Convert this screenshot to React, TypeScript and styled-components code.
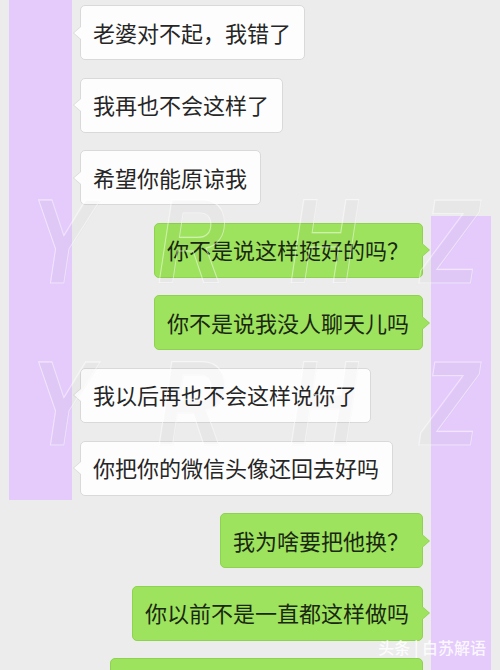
import React from 'react';
import styled, { createGlobalStyle, css } from 'styled-components';

type Side = 'left' | 'right';

interface Message {
  id: number;
  side: Side;
  text: string;
}

const messages: Message[] = [
  { id: 1, side: 'left', text: '老婆对不起，我错了' },
  { id: 2, side: 'left', text: '我再也不会这样了' },
  { id: 3, side: 'left', text: '希望你能原谅我' },
  { id: 4, side: 'right', text: '你不是说这样挺好的吗？' },
  { id: 5, side: 'right', text: '你不是说我没人聊天儿吗' },
  { id: 6, side: 'left', text: '我以后再也不会这样说你了' },
  { id: 7, side: 'left', text: '你把你的微信头像还回去好吗' },
  { id: 8, side: 'right', text: '我为啥要把他换？' },
  { id: 9, side: 'right', text: '你以前不是一直都这样做吗' },
  { id: 10, side: 'right', text: '那是以前啊，现在我不想换了' },
];

const MARK = ['Y', 'R', 'H', 'Z'];

const App = () => (
  <>
    <GlobalStyle />
    <Screen>
      <Thread>
        {messages.map((m) => (
          <Row key={m.id} side={m.side}>
            <Bubble side={m.side}>{m.text}</Bubble>
          </Row>
        ))}
      </Thread>

      <MaskBar side="left" />
      <MaskBar side="right" />

      <WatermarkLayer>
        <WatermarkRow>
          {MARK.map((l) => <MarkLetter key={l}>{l}</MarkLetter>)}
        </WatermarkRow>
        <WatermarkRow>
          {MARK.map((l) => <MarkLetter key={l}>{l}</MarkLetter>)}
        </WatermarkRow>
      </WatermarkLayer>

      <Credit>头条 | 白苏解语</Credit>
    </Screen>
  </>
);

const GlobalStyle = createGlobalStyle`
  html, body {
    margin: 0;
    padding: 0;
    background: #ececec;
  }

  body {
    font-family: "Noto Sans CJK SC", "Noto Sans", sans-serif;
  }
`;

const Screen = styled.div`
  position: relative;
  width: 500px;
  height: 670px;
  overflow: hidden;
  background: #ececec;
`;

const Thread = styled.div`
  display: flex;
  flex-direction: column;
  gap: 17.6px;
  padding-top: 5px;
`;

const Row = styled.div<{ side: Side }>`
  display: flex;
  justify-content: ${({ side }) => (side === 'left' ? 'flex-start' : 'flex-end')};
  padding: ${({ side }) => (side === 'left' ? '0 0 0 80px' : '0 77px 0 0')};
`;

const Bubble = styled.div<{ side: Side }>`
  position: relative;
  box-sizing: border-box;
  height: 55px;
  display: flex;
  align-items: center;
  padding: 0 13px 2px 12px;
  border-radius: 5px;
  font-size: 22px;
  line-height: 1;
  white-space: nowrap;

  ${({ side }) => (side === 'left'
    ? css`
      background: #fdfdfd;
      border: 1px solid #d9d9d9;
      color: #262626;
    `
    : css`
      background: #9ee35d;
      border: 1px solid #8fd24f;
      color: #1a2812;
    `)}

  &::before,
  &::after {
    content: "";
    position: absolute;
    top: 50%;
    width: 0;
    height: 0;
    border-top: 7px solid transparent;
    border-bottom: 7px solid transparent;
    transform: translateY(-50%);
  }

  ${({ side }) => (side === 'left'
    ? css`
      &::before {
        left: -8px;
        border-right: 8px solid #d9d9d9;
      }
      &::after {
        left: -7px;
        border-right: 8px solid #fdfdfd;
      }
    `
    : css`
      &::before {
        right: -8px;
        border-left: 8px solid #8fd24f;
      }
      &::after {
        right: -7px;
        border-left: 8px solid #9ee35d;
      }
    `)}
`;

const MaskBar = styled.div<{ side: Side }>`
  position: absolute;
  background: #e4cbfb;
  ${({ side }) => (side === 'left'
    ? css`
      left: 9px;
      top: 0;
      width: 63px;
      height: 500px;
    `
    : css`
      left: 431px;
      top: 216px;
      width: 60px;
      height: 454px;
    `)}
`;

const WatermarkLayer = styled.div`
  position: absolute;
  inset: 186px 0 auto 0;
  display: flex;
  flex-direction: column;
  gap: 52px;
  padding: 0 14px 0 22px;
  pointer-events: none;
`;

const WatermarkRow = styled.div`
  display: flex;
  justify-content: space-between;
  height: 110px;
  align-items: center;
`;

const MarkLetter = styled.span`
  font-family: "Liberation Sans", sans-serif;
  font-size: 120px;
  font-weight: bold;
  font-style: italic;
  line-height: 1;
  color: transparent;
  -webkit-text-stroke: 1.2px rgba(255, 255, 255, 0.5);
  text-shadow: 1px 1px 0 rgba(0, 0, 0, 0.02);
  transform: scaleX(0.78);
`;

const Credit = styled.div`
  position: absolute;
  right: 14px;
  bottom: 14px;
  font-size: 16px;
  font-weight: 500;
  line-height: 18px;
  color: rgba(255, 255, 255, 0.85);
  white-space: nowrap;
`;

export default App;
